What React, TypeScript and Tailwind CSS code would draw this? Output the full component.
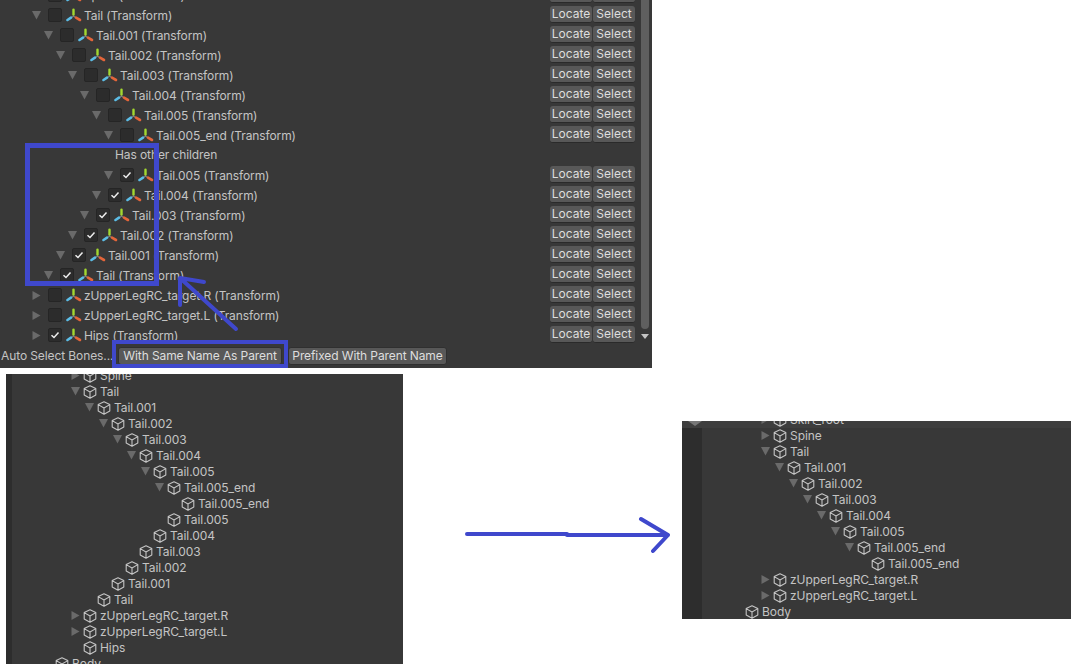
import React from "react";

const FONT = "font-['Inter','Noto_Sans',sans-serif]";

// transform gizmo icon next to each bone
const TransformIcon = () => (
  <svg width="16" height="15" viewBox="0 0 16 15" className="shrink-0">
    <path d="M7.5 8 L7.5 6 M7.5 8 L5.5 9.5 M7.5 8 L9.5 9.5" stroke="#7c7c7c" strokeWidth="1.2" />
    <path d="M7.5 1.8 L7.5 6.4" stroke="#a3d92f" strokeWidth="2.4" strokeLinecap="round" />
    <path d="M10 9.7 L14 12" stroke="#e4653a" strokeWidth="2.6" strokeLinecap="round" />
    <path d="M5 9.7 L1.5 12" stroke="#5cbde6" strokeWidth="2.6" strokeLinecap="round" />
  </svg>
);

const CubeIcon = () => (
  <svg width="14" height="14" viewBox="0 0 14 14" fill="none" className="shrink-0">
    <path
      d="M7 .8 L12.8 3.6 V10 L7 13.2 L1.2 10 V3.6 Z M1.2 3.6 L7 7 L12.8 3.6 M7 7 V13.2"
      stroke="#c4c4c4"
      strokeWidth="1.1"
      strokeLinejoin="round"
    />
  </svg>
);

const Arrow = ({ open }: { open: boolean }) => (
  <svg width="9" height="9" viewBox="0 0 9 9" className="shrink-0">
    {open ? <path d="M0 0 H9 L4.5 8.5 Z" fill="#6a6a6a" /> : <path d="M.5 0 L8.5 4.5 L.5 9 Z" fill="#6a6a6a" />}
  </svg>
);

const Check = ({ on }: { on: boolean }) => (
  <div className="flex h-[14px] w-[14px] shrink-0 items-center justify-center rounded-[2px] border border-[#252525] bg-[#2c2c2c]">
    {on && (
      <svg width="10" height="10" viewBox="0 0 10 10" fill="none">
        <path d="M1.5 5.2 L4 7.5 L8.5 2.5" stroke="#eeeeee" strokeWidth="1.5" />
      </svg>
    )}
  </div>
);

type BoneRow = { name: string; level: number; arrow: "open" | "closed"; on: boolean };

const bones: BoneRow[] = [
  { name: "Spine (Transform)", level: 0, arrow: "closed", on: false },
  { name: "Tail (Transform)", level: 0, arrow: "open", on: false },
  { name: "Tail.001 (Transform)", level: 1, arrow: "open", on: false },
  { name: "Tail.002 (Transform)", level: 2, arrow: "open", on: false },
  { name: "Tail.003 (Transform)", level: 3, arrow: "open", on: false },
  { name: "Tail.004 (Transform)", level: 4, arrow: "open", on: false },
  { name: "Tail.005 (Transform)", level: 5, arrow: "open", on: false },
  { name: "Tail.005_end (Transform)", level: 6, arrow: "open", on: false },
  { name: "Tail.005 (Transform)", level: 6, arrow: "open", on: true },
  { name: "Tail.004 (Transform)", level: 5, arrow: "open", on: true },
  { name: "Tail.003 (Transform)", level: 4, arrow: "open", on: true },
  { name: "Tail.002 (Transform)", level: 3, arrow: "open", on: true },
  { name: "Tail.001 (Transform)", level: 2, arrow: "open", on: true },
  { name: "Tail (Transform)", level: 1, arrow: "open", on: true },
  { name: "zUpperLegRC_target.R (Transform)", level: 0, arrow: "closed", on: false },
  { name: "zUpperLegRC_target.L (Transform)", level: 0, arrow: "closed", on: false },
  { name: "Hips (Transform)", level: 0, arrow: "closed", on: true },
];

const SmallButton = ({ label, className }: { label: string; className: string }) => (
  <div className={`flex h-[17px] items-center justify-center rounded-[3px] border-b border-b-[#2a2a2a] bg-[#585858] text-[12px] text-[#dedede] ${className}`}>
    {label}
  </div>
);

const Bone = ({ row }: { row: BoneRow }) => (
  <div className="flex h-5 items-center">
    <div className="flex min-w-0 flex-1 items-center pl-[32px]">
      <div style={{ width: row.level * 12 }} className="shrink-0" />
      <Arrow open={row.arrow === "open"} />
      <div className="ml-[7px]">
        <Check on={row.on} />
      </div>
      <div className="ml-[4px]">
        <TransformIcon />
      </div>
      <span className="ml-[2px] whitespace-nowrap pt-[1px] text-[12px] tracking-[-0.1px]">{row.name}</span>
    </div>
    <div className="mb-[2px] flex w-[86px] shrink-0 gap-px">
      <SmallButton label="Locate" className="w-[42px]" />
      <SmallButton label="Select" className="w-[42px]" />
    </div>
  </div>
);

type TreeRow = { name: string; text: number; arrow?: "open" | "closed" };

const TreeLine = ({ row, base }: { row: TreeRow; base: number }) => (
  <div className="relative flex h-4 items-center" style={{ paddingLeft: row.text - base - 17 }}>
    {row.arrow && (
      <div className="absolute top-[3px]" style={{ left: row.text - base - 29 }}>
        <Arrow open={row.arrow === "open"} />
      </div>
    )}
    <CubeIcon />
    <span className="ml-[3px] whitespace-nowrap text-[12px] tracking-[-0.05px]">{row.name}</span>
  </div>
);

const leftTree: TreeRow[] = [
  { name: "Spine", text: 100, arrow: "closed" },
  { name: "Tail", text: 100, arrow: "open" },
  { name: "Tail.001", text: 114, arrow: "open" },
  { name: "Tail.002", text: 128, arrow: "open" },
  { name: "Tail.003", text: 142, arrow: "open" },
  { name: "Tail.004", text: 156, arrow: "open" },
  { name: "Tail.005", text: 170, arrow: "open" },
  { name: "Tail.005_end", text: 184, arrow: "open" },
  { name: "Tail.005_end", text: 198 },
  { name: "Tail.005", text: 184 },
  { name: "Tail.004", text: 170 },
  { name: "Tail.003", text: 156 },
  { name: "Tail.002", text: 142 },
  { name: "Tail.001", text: 128 },
  { name: "Tail", text: 114 },
  { name: "zUpperLegRC_target.R", text: 100, arrow: "closed" },
  { name: "zUpperLegRC_target.L", text: 100, arrow: "closed" },
  { name: "Hips", text: 100 },
  { name: "Body", text: 72 },
];

const rightTree: TreeRow[] = [
  { name: "Skirt_root", text: 790, arrow: "closed" },
  { name: "Spine", text: 790, arrow: "closed" },
  { name: "Tail", text: 790, arrow: "open" },
  { name: "Tail.001", text: 804, arrow: "open" },
  { name: "Tail.002", text: 818, arrow: "open" },
  { name: "Tail.003", text: 832, arrow: "open" },
  { name: "Tail.004", text: 846, arrow: "open" },
  { name: "Tail.005", text: 860, arrow: "open" },
  { name: "Tail.005_end", text: 874, arrow: "open" },
  { name: "Tail.005_end", text: 888 },
  { name: "zUpperLegRC_target.R", text: 790, arrow: "closed" },
  { name: "zUpperLegRC_target.L", text: 790, arrow: "closed" },
  { name: "Body", text: 762 },
];

export default function App() {
  return (
    <div className={`relative h-[672px] w-[1076px] overflow-hidden bg-white text-[#c4c4c4] ${FONT}`}>
      {/* inspector screenshot */}
      <div className="flex h-[368px] w-[652px] overflow-hidden bg-[#383838]">
        <div className="flex min-w-0 flex-1 flex-col overflow-hidden">
          <div className="h-[347px] overflow-hidden">
            <div className="-mt-[15px] w-[636px]">
              {bones.slice(0, 8).map((b, i) => (
                <Bone key={i} row={b} />
              ))}
              <div className="flex h-5 items-center pl-[115px] text-[12px] tracking-[-0.1px]">Has other children</div>
              {bones.slice(8).map((b, i) => (
                <Bone key={i} row={b} />
              ))}
            </div>
          </div>
          <div className="flex h-[21px] items-start pl-[1px]">
            <span className="w-[117px] shrink-0 whitespace-nowrap text-[12px] leading-[18px] tracking-[-0.1px]">Auto Select Bones...</span>
            <div className="flex h-[18px] w-[164px] shrink-0 items-center justify-center rounded-[3px] border border-[#303030] bg-[#585858] text-[12px] tracking-[-0.1px] text-[#dedede]">
              With Same Name As Parent
            </div>
            <div className="ml-[6px] flex h-[18px] w-[159px] shrink-0 items-center justify-center rounded-[3px] border border-[#303030] bg-[#585858] text-[12px] tracking-[-0.1px] text-[#dedede]">
              Prefixed With Parent Name
            </div>
          </div>
        </div>
        {/* scrollbar */}
        <div className="flex w-[12px] shrink-0 flex-col pl-[1px]">
          <div className="h-[329px] w-[8px] rounded-b-[4px] bg-[#5f5f5f]" />
          <svg width="8" height="6" viewBox="0 0 8 6" className="mt-[5px]">
            <path d="M0 0 H8 L4 5 Z" fill="#c4c4c4" />
          </svg>
        </div>
      </div>

      <div className="flex items-start">
        {/* hierarchy, before */}
        <div className="ml-[6px] mt-[6px] h-[290px] w-[397px] shrink-0 overflow-hidden bg-[#383838] shadow-[inset_6px_0_0_#2d2d2d]">
          <div className="-mt-[6px]">
            {leftTree.map((r, i) => (
              <TreeLine key={i} row={r} base={6} />
            ))}
          </div>
        </div>
        {/* hierarchy, after */}
        <div className="relative ml-[279px] mt-[53px] h-[198px] w-[389px] shrink-0 overflow-hidden bg-[#383838] shadow-[inset_20px_0_0_#2d2d2d]">
          <div className="h-[7px] bg-[#3e3e3e]" />
          <svg width="14" height="6" viewBox="0 0 14 6" className="absolute left-[6px] top-0">
            <path d="M0 0 H14 L7 5 Z" fill="#777777" />
          </svg>
          <div className="-mt-[16px]">
            {rightTree.map((r, i) => (
              <TreeLine key={i} row={r} base={682} />
            ))}
          </div>
        </div>
      </div>

      {/* hand-drawn annotations */}
      <div className="absolute left-[25px] top-[143px] h-[143px] w-[134px] border-[5px] border-[#3f48cc]" />
      <div className="absolute left-[112px] top-[340px] h-[28px] w-[176px] border-[4px] border-[#3f48cc]" />
      <svg width="1076" height="672" className="absolute left-0 top-0" fill="none">
        <g stroke="#3f48cc" strokeWidth="4" strokeLinecap="round" strokeLinejoin="round">
          <path d="M236 329 L180 278 M180 278 L204 282 M180 278 L180 305" />
          <path d="M467 534 H567 M567 535 H668 M641 519 L668 535 L653 551" />
        </g>
      </svg>
    </div>
  );
}
